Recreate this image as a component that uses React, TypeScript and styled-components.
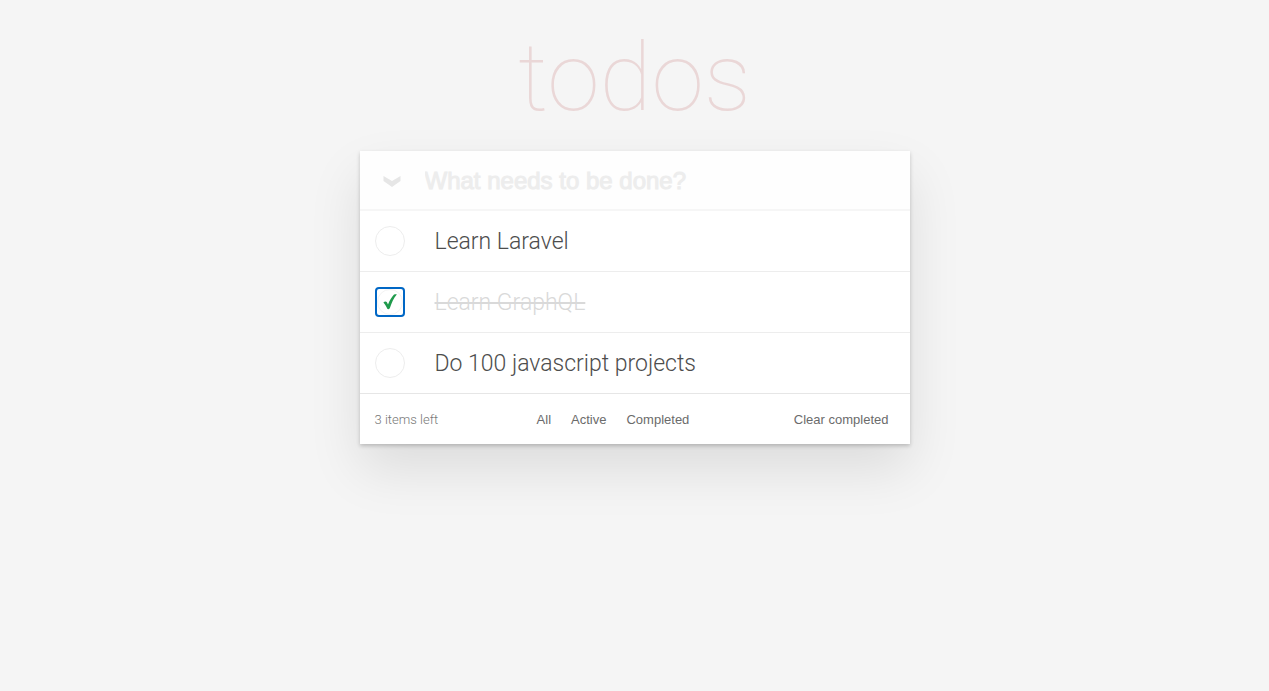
import React, { useState } from "react";
import styled, { createGlobalStyle } from "styled-components";

const GlobalStyle = createGlobalStyle`
  * { box-sizing: border-box; }
  body {
    margin: 0;
    background: #f5f5f5;
    color: #4d4d4d;
    font-family: Roboto, "Liberation Sans", sans-serif;
  }
`;

const Page = styled.div`
  max-width: 550px;
  margin: 0 auto;
  padding: 20px 0 80px;
`;

const Title = styled.h1`
  margin: 0;
  height: 131px;
  font-size: 95px;
  line-height: 116px;
  font-weight: 100;
  text-align: center;
  color: rgba(175, 47, 47, 0.15);
`;

const Card = styled.main`
  background: #fff;
  box-shadow: 0 2px 4px 0 rgba(0, 0, 0, 0.2), 0 25px 50px 0 rgba(0, 0, 0, 0.1);
`;

const NewTodo = styled.header`
  display: flex;
  align-items: center;
  height: 58px;
  background: #fefefe;
`;

const ToggleAll = styled.button`
  display: flex;
  align-items: center;
  justify-content: center;
  width: 65px;
  height: 58px;
  padding: 0;
  border: 0;
  background: none;
`;

const NewInput = styled.input`
  flex: 1;
  min-width: 0;
  height: 58px;
  padding: 2px 0 0;
  border: 0;
  outline: 0;
  background: none;
  font: 24px "Liberation Sans", Arial, sans-serif;
  color: #4d4d4d;
  &::placeholder { color: #ededed; opacity: 1; -webkit-text-stroke: 1px #ededed; }
`;

const List = styled.ul`
  list-style: none;
  margin: 0;
  padding: 0;
  border-top: 1px solid #f6f6f6;
`;

const Item = styled.li`
  display: flex;
  align-items: center;
  gap: 30px;
  height: 61px;
  padding: 0 15px;
  border-top: 1px solid #ededed;
  &:first-child { border-top-color: #f6f6f6; }
`;

const CheckWrap = styled.span<{ $focused?: boolean }>`
  display: grid;
  flex: none;
  width: 30px;
  height: 30px;
  border-radius: 4px;
  box-shadow: ${(p) => (p.$focused ? "inset 0 0 0 2px #0067c5" : "none")};
  > * { grid-area: 1 / 1; place-self: center; }
`;

const Check = styled.input<{ $focused?: boolean }>`
  appearance: none;
  width: ${(p) => (p.$focused ? "26px" : "30px")};
  height: ${(p) => (p.$focused ? "26px" : "30px")};
  margin: 0;
  border: 1px solid ${(p) => (p.$focused ? "#f3f3f3" : "#ededed")};
  border-radius: 50%;
  outline: 0;
`;

const Tick = styled.svg`
  pointer-events: none;
`;

const Label = styled.label<{ $done: boolean }>`
  padding-top: 2px;
  font-size: 23px;
  line-height: 30px;
  font-weight: 300;
  color: ${(p) => (p.$done ? "#d9d9d9" : "#4d4d4d")};
  text-decoration: ${(p) => (p.$done ? "line-through" : "none")};
`;

const Footer = styled.footer`
  display: flex;
  justify-content: space-between;
  align-items: center;
  height: 51px;
  padding: 2px 15px 0;
  border-top: 1px solid #e6e6e6;
  color: #777;
`;

const Count = styled.span`
  font-size: 13px;
  line-height: 20px;
  font-weight: 300;
`;

const Filters = styled.nav`
  display: flex;
  gap: 8px;
`;

const TextButton = styled.button`
  padding: 0 6px;
  border: 0;
  background: none;
  font: 13px "Liberation Sans", Arial, sans-serif;
  line-height: 20px;
  color: #6b6b6b;
  cursor: pointer;
`;

const initial = [
  { id: 1, text: "Learn Laravel", done: false },
  { id: 2, text: "Learn GraphQL", done: true },
  { id: 3, text: "Do 100 javascript projects", done: false },
];

export default function App() {
  const [todos, setTodos] = useState(initial);
  const [active, setActive] = useState(2);
  const toggle = (id: number) => {
    setActive(id);
    setTodos(todos.map((t) => (t.id === id ? { ...t, done: !t.done } : t)));
  };
  return (
    <>
      <GlobalStyle />
      <Page>
        <Title>todos</Title>
        <Card>
          <NewTodo>
            <ToggleAll type="button" aria-label="Mark all as complete">
              <svg width="18" height="14" viewBox="0 0 18 14" fill="#e6e6e6">
                <path d="M0.5 3 L9 8 L17.5 3 V8 L9 14 L0.5 8 Z" />
              </svg>
            </ToggleAll>
            <NewInput aria-label="New todo" placeholder="What needs to be done?" />
          </NewTodo>
          <List>
            {todos.map((t) => (
              <Item key={t.id}>
                <CheckWrap $focused={t.id === active}>
                  <Check
                    type="checkbox"
                    id={`todo-${t.id}`}
                    checked={t.done}
                    $focused={t.id === active}
                    onChange={() => toggle(t.id)}
                  />
                  {t.done && (
                    <Tick width="14" height="16" viewBox="0 0 14 16" fill="#1f9a4c">
                      <path d="M0.4 8.4 C1.4 7.2 3.2 7 3.9 8.2 L5 10.5 C6.6 6.5 8.6 3 10.8 0.8 C11.6 0.3 13 0.2 13.8 0.4 C10.8 4 8.6 8.5 6.9 14 C6.2 15.3 4.9 15.6 4.3 14.8 C3.2 12.3 2.2 10.3 0.4 8.4 Z" />
                    </Tick>
                  )}
                </CheckWrap>
                <Label htmlFor={`todo-${t.id}`} $done={t.done}>{t.text}</Label>
              </Item>
            ))}
          </List>
          <Footer>
            <Count>3 items left</Count>
            <Filters aria-label="Filter">
              <TextButton type="button">All</TextButton>
              <TextButton type="button">Active</TextButton>
              <TextButton type="button">Completed</TextButton>
            </Filters>
            <TextButton type="button">Clear completed</TextButton>
          </Footer>
        </Card>
      </Page>
    </>
  );
}
